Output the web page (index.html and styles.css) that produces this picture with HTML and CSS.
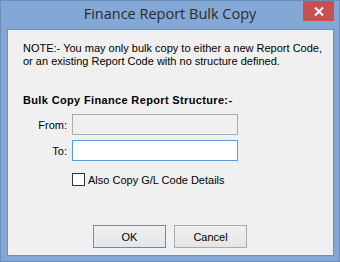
FILE: index.html
```html
<!DOCTYPE html>
<html lang="en">
<head>
    <meta charset="UTF-8">
    <title>Finance Report Bulk Copy</title>
    <link rel="stylesheet" href="styles.css">
</head>
<body>
    <div class="window">
        <div class="titlebar">
            <span class="title">Finance Report Bulk Copy</span>
            <div class="close">
                <svg width="10" height="9" viewBox="0 0 10 9">
                    <path d="M1 0.5 L9 8.5 M9 0.5 L1 8.5" stroke="#fff" stroke-width="2"/>
                </svg>
            </div>
        </div>

        <div class="content">
            <p class="note">NOTE:- You may only bulk copy to either a new Report Code,<br>or an existing Report Code with no structure defined.</p>

            <h2 class="heading">Bulk Copy Finance Report Structure:-</h2>

            <div class="row">
                <label>From:</label>
                <div class="field disabled"></div>
            </div>
            <div class="row">
                <label>To:</label>
                <div class="field focused"></div>
            </div>

            <div class="check-row">
                <span class="checkbox"></span>
                <span>Also Copy G/L Code Details</span>
            </div>

            <div class="buttons">
                <button class="btn default">OK</button>
                <button class="btn">Cancel</button>
            </div>
        </div>
    </div>
</body>
</html>
```

FILE: styles.css
```css
body {
    margin: 0;
    padding: 0;
    font-family: "Liberation Sans", Arial, sans-serif;
    font-size: 11px;
    color: #000;
}

.window {
    width: 340px;
    height: 262px;
    box-sizing: border-box;
    background-color: #84a8d6;
    border: 1px solid #6b8dbd;
    display: flex;
    flex-direction: column;
}

.titlebar {
    position: relative;
    height: 28px;
    display: flex;
    align-items: center;
    justify-content: center;
}

.title {
    font-family: "Open Sans", sans-serif;
    font-size: 14.5px;
    color: #2b2b2b;
    margin-top: -3px;
}

.close {
    position: absolute;
    top: 0;
    right: 5px;
    width: 31px;
    height: 20px;
    background-color: #c75050;
    display: flex;
    align-items: center;
    justify-content: center;
}

.content {
    margin: 0 5px 5px 6px;
    flex: 1;
    background-color: #f0f0f0;
    border: 1px solid #6e8ebd;
    padding: 12px 15px 0 15px;
    display: flex;
    flex-direction: column;
}

.note {
    margin: 0;
    line-height: 13px;
    white-space: nowrap;
}

.heading {
    margin: 26px 0 0 0;
    font-size: 11px;
    font-weight: bold;
    line-height: 13px;
    letter-spacing: 0.35px;
}

.row {
    display: flex;
    align-items: center;
    margin-top: 7px;
}

.row + .row {
    margin-top: 5px;
}

.row label {
    width: 44px;
    text-align: right;
    margin-right: 5px;
    color: #000;
}

.field {
    width: 166px;
    height: 21px;
    box-sizing: border-box;
    border: 1px solid #acacac;
}

.field.disabled {
    background-color: #f0f0f0;
}

.field.focused {
    background-color: #fff;
    border-color: #569de5;
}

.check-row {
    display: flex;
    align-items: center;
    margin: 12px 0 0 49px;
}

.checkbox {
    width: 13px;
    height: 13px;
    box-sizing: border-box;
    border: 1px solid #333;
    background-color: #fff;
    margin-right: 3px;
}

.buttons {
    display: flex;
    justify-content: center;
    gap: 8px;
    margin-top: auto;
    margin-bottom: 7px;
    padding-right: 1px;
}

.btn {
    width: 73px;
    height: 23px;
    font-family: "Liberation Sans", Arial, sans-serif;
    font-size: 11px;
    color: #000;
    background: linear-gradient(#f0f0f0, #e5e5e5);
    border: 1px solid #acacac;
    padding: 0;
}

.btn.default {
    border-color: #3399ff;
}
```
